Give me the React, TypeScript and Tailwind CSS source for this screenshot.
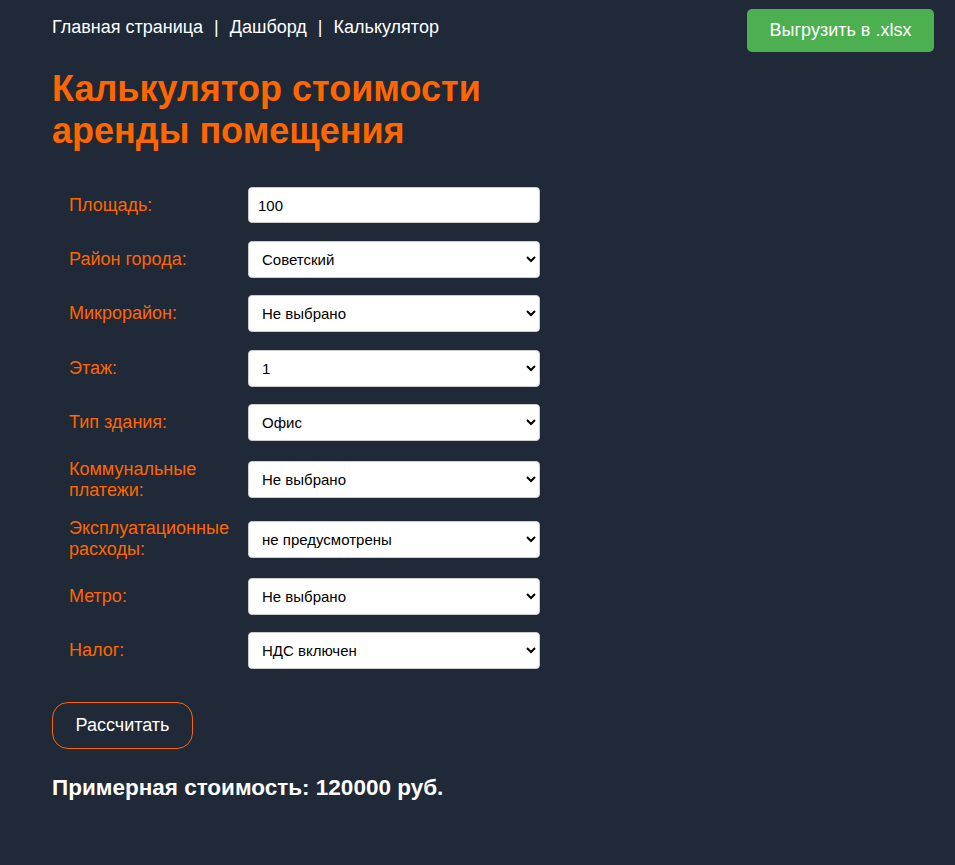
import React from "react";

const rows: { label: string; type: "input" | "select"; value: string }[] = [
  { label: "Площадь:", type: "input", value: "100" },
  { label: "Район города:", type: "select", value: "Советский" },
  { label: "Микрорайон:", type: "select", value: "Не выбрано" },
  { label: "Этаж:", type: "select", value: "1" },
  { label: "Тип здания:", type: "select", value: "Офис" },
  { label: "Коммунальные платежи:", type: "select", value: "Не выбрано" },
  { label: "Эксплуатационные расходы:", type: "select", value: "не предусмотрены" },
  { label: "Метро:", type: "select", value: "Не выбрано" },
  { label: "Налог:", type: "select", value: "НДС включен" },
];

export default function App() {
  return (
    <div className="min-h-screen bg-[#1f2937] font-['Liberation_Sans',Arial,sans-serif]">
      <header className="flex justify-between items-start pl-[52px] pr-[21px] pt-[9px]">
        <nav className="flex items-center gap-[11px] pt-[8px] text-[18px] leading-[21px] text-white">
          <a>Главная страница</a>
          <span>|</span>
          <a>Дашборд</a>
          <span>|</span>
          <a>Калькулятор</a>
        </nav>
        <button className="h-[43px] w-[187px] rounded-[5px] bg-[#4caf50] text-white text-[18px]">
          Выгрузить в .xlsx
        </button>
      </header>

      <main className="pl-[52px] w-[540px]">
        <h1 className="mt-[16px] text-[36px] leading-[42px] font-bold text-[#ff6600]">
          Калькулятор стоимости аренды помещения
        </h1>

        <div className="mt-[35px] pl-[17px] flex flex-col gap-[17.5px]">
          {rows.map((r) => (
            <div key={r.label} className="flex items-center">
              <label className="w-[179px] pr-[10px] text-[18px] leading-[21px] text-[#ff6600]">
                {r.label}
              </label>
              {r.type === "input" ? (
                <input
                  defaultValue={r.value}
                  className="h-[36px] w-[292px] rounded-[4px] border border-[#ccc] bg-white px-[9px] text-[15px] text-black"
                />
              ) : (
                <select
                  defaultValue={r.value}
                  className="h-[37px] w-[292px] rounded-[4px] border border-[#ccc] bg-white px-[9px] text-[15px] text-black"
                >
                  <option value={r.value}>{r.value}</option>
                </select>
              )}
            </div>
          ))}
        </div>

        <button className="mt-[33px] h-[47px] w-[141px] rounded-[16px] border border-[#ff6600] text-white text-[18px]">
          Рассчитать
        </button>

        <p className="mt-[26px] text-[22.5px] leading-[25px] font-bold text-white whitespace-nowrap">
          Примерная стоимость: 120000 руб.
        </p>
      </main>
    </div>
  );
}
